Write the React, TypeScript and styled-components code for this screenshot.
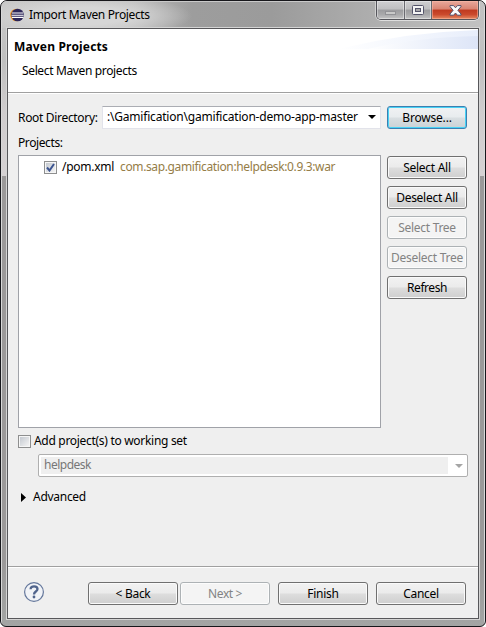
import React from "react";
import styled, { createGlobalStyle, css } from "styled-components";

const Global = createGlobalStyle`
  * { box-sizing: border-box; }
  body { margin: 0; background: #fff; overflow: hidden; }
`;

const Window = styled.div`
  width: 486px;
  height: 627px;
  display: flex;
  flex-direction: column;
  padding: 0 6px 6px 5px;
  border: 1px solid #17171b;
  border-radius: 7px 7px 6px 6px;
  font: 12px/16px "Noto Sans", "Open Sans", sans-serif;
  color: #000;
  background:
    linear-gradient(90deg, #d8d8d8 0 1px, transparent 1px calc(100% - 1px), #d8d8d8 calc(100% - 1px)),
    linear-gradient(180deg, transparent 0 175px, #9b9999 175px 560px, #a3a5a4 100%),
    linear-gradient(180deg, #c4c4c4 0 28px, #bfbfbf 60px, #cfcccd 110px, #d6d2d3 175px);
`;

const TitleBar = styled.header`
  height: 27px;
  flex: none;
  margin: 0 -5px 0 -4px;
  padding-left: 9px;
  display: flex;
  align-items: flex-start;
  border-radius: 5px 5px 0 0;
  border-top: 1px solid #c9c9c9;
  background:
    radial-gradient(ellipse 110px 22px at 80px 14px, #d6d6d6 0 40%, transparent 100%),
    linear-gradient(90deg, #c6c6c6 0, #bcbcbc 130px, #9d9d9d 190px, #9b9b9b 270px, #acacac 360px, #c2c2c2 100%);
`;

const TitleIcon = styled.svg`
  width: 14px;
  height: 14px;
  margin: 6px 5px 0 -1px;
`;

const Label = styled.span<{ $gap?: number; $tone?: string; $bold?: boolean }>`
  display: block;
  white-space: nowrap;
  letter-spacing: ${(p) => p.$gap ?? -0.28}px;
  color: ${(p) => p.$tone ?? "inherit"};
  font-weight: ${(p) => (p.$bold ? 700 : 400)};
`;

const TitleText = styled(Label)`
  margin-top: 5px;
  flex: 1;
`;

const Controls = styled.div`
  display: flex;
  width: 103px;
  height: 19px;
  margin: -1px 5px 0 0;
  border: 1px solid #55555b;
  border-top: 0;
  border-radius: 0 0 5px 5px;
  overflow: hidden;
  box-shadow: 0 1px 0 #dedede, 1px 0 0 #dedede, -1px 0 0 #d0d0d0;
`;

const Control = styled.button<{ $width: number; $close?: boolean }>`
  width: ${(p) => p.$width}px;
  padding: 0;
  border: 0;
  border-right: ${(p) => (p.$close ? "0" : "1px solid #6a6a70")};
  display: flex;
  justify-content: center;
  align-items: center;
  box-shadow: inset 0 0 0 1px ${(p) => (p.$close ? "rgba(255,190,170,.5)" : "rgba(255,255,255,.4)")};
  background: ${(p) =>
    p.$close
      ? "linear-gradient(#e8a89c 0, #d98472 45%, #bf3a20 50%, #cb4a2d 75%, #e58a63 100%)"
      : "linear-gradient(#cfcfd1 0, #bebec0 45%, #9c9c9f 50%, #a9a9ab 75%, #c4c4c5 100%)"};
`;

const Client = styled.main`
  width: 472px;
  height: 591px;
  flex: none;
  margin-left: 1px;
  display: flex;
  flex-direction: column;
  border: 1px solid #57575a;
  background: #efefef;
  box-shadow: 0 0 0 1px #d4d4d4;
`;

const Banner = styled.section`
  height: 64px;
  flex: none;
  display: flex;
  justify-content: space-between;
  background: #fff;
  border-bottom: 1px solid #a0a0a0;
`;

const BannerText = styled.div`
  padding: 10px 0 0 6px;
  display: flex;
  flex-direction: column;
  gap: 8px;
`;

const Indented = styled(Label)`
  margin-left: 8px;
`;

const Swoosh = styled.svg`
  width: 140px;
  height: 20px;
`;

const Content = styled.section`
  height: 474px;
  flex: none;
  padding: 12px 10px 0;
  border-top: 1px solid #fff;
  border-bottom: 1px solid #a0a0a0;
  display: flex;
  flex-direction: column;
`;

const DirectoryRow = styled.div`
  display: flex;
  height: 23px;
`;

const RowCaption = styled.div`
  width: 84px;
  padding-top: 4px;
`;

const Field = styled.div`
  width: 279px;
  margin-right: 6px;
  display: flex;
  align-items: center;
  justify-content: space-between;
  padding: 0 4px 1px 4px;
  background: #fff;
  border: 1px solid #e2e3ea;
  border-top-color: #abadb3;
`;

const Button = styled.button<{ $width?: number; $focus?: boolean }>`
  width: ${(p) => p.$width ?? 80}px;
  height: 23px;
  flex: none;
  padding: 1px 0 0;
  display: flex;
  justify-content: center;
  align-items: center;
  font: inherit;
  color: #000;
  border: 1px solid #707070;
  border-radius: 3px;
  background: linear-gradient(#f2f2f2 0, #ebebeb 48%, #dddddd 52%, #cfcfcf 100%);
  box-shadow: inset 0 0 0 1px #fafafa;
  ${(p) =>
    p.$focus &&
    css`
      border-color: #3c7fb1;
      background: linear-gradient(#f0f2f3 0, #e8ecee 48%, #d9dfe2 52%, #cbd2d6 100%);
      box-shadow: inset 0 0 0 1px #48d2f5;
    `}
  &:disabled {
    color: #838383;
    border-color: #adb2b5;
    background: #f4f4f4;
    box-shadow: inset 0 0 0 1px #fcfcfc;
  }
`;

const ListCaption = styled.div`
  height: 26px;
  padding-top: 6px;
`;

const ProjectsRow = styled.div`
  display: flex;
  gap: 6px;
  height: 273px;
`;

const Tree = styled.div`
  width: 363px;
  background: #fff;
  border: 1px solid #a0a2a8;
  padding: 2px 0 0 25px;
`;

const TreeItem = styled.div`
  display: flex;
  align-items: center;
  height: 17px;
`;

const ItemName = styled(Label)`
  width: 58px;
  margin-left: 5px;
`;

const Coordinates = styled(Label)`
  width: 214px;
`;

const Actions = styled.div`
  display: flex;
  flex-direction: column;
  gap: 7px;
  padding-top: 1px;
`;

const Check = styled.span`
  width: 13px;
  height: 13px;
  flex: none;
  border: 1px solid #8e8f8f;
  background: linear-gradient(135deg, #c4c9d0, #f4f4f4) content-box, #f6f6f6;
  padding: 1px;
  display: flex;
`;

const TreeCheck = styled(Check)`
  margin-top: 2px;
`;

const WorkingSetRow = styled.div`
  display: flex;
  align-items: center;
  gap: 3px;
  height: 26px;
`;

const DisabledCombo = styled.div`
  width: 430px;
  height: 23px;
  margin-left: 20px;
  display: flex;
  align-items: center;
  justify-content: space-between;
  padding: 2px 4px 2px 2px;
  background: #fff;
  border: 1px solid #afafaf;
  border-radius: 2px;
`;

const ComboValue = styled.div`
  width: 407px;
  height: 17px;
  padding-left: 3px;
  background: #efefef;
`;

const AdvancedRow = styled.div`
  display: flex;
  align-items: center;
  gap: 7px;
  margin-top: 12px;
  padding-left: 3px;
`;

const Footer = styled.footer`
  flex: 1;
  display: flex;
  align-items: flex-start;
  padding: 14px 0 0 15px;
  border-top: 1px solid #fff;
`;

const Help = styled.svg`
  width: 22px;
  height: 22px;
  margin: -1px 43px 0 0;
`;

const ButtonGroup = styled.div`
  display: flex;
  gap: 8px;
`;

const Paging = styled.div`
  display: flex;
  gap: 2px;
`;

const Caret = ({ fill, w, h }: { fill: string; w: number; h: number }) => (
  <svg width={w} height={h} viewBox="0 0 9 5" preserveAspectRatio="none">
    <path d="M0 0h9L4.500 5z" fill={fill} />
  </svg>
);

export default function App() {
  return (
    <>
      <Global />
      <Window>
        <TitleBar>
          <TitleIcon viewBox="0 0 14 14">
            <circle cx="6.400" cy="7" r="6.300" fill="#f09a2e" />
            <circle cx="7.600" cy="7" r="6.300" fill="#2c2558" />
            <path d="M2 5h11.400M1.600 7.200h12M2 9.400h11.400" stroke="#fff" strokeWidth="1.100" />
          </TitleIcon>
          <TitleText $gap={-0.36}>Import Maven Projects</TitleText>
          <Controls>
            <Control $width={28} aria-label="Minimize">
              <svg width="11" height="12" viewBox="0 0 11 12">
                <rect x=".5" y="7.500" width="10" height="3" fill="#c9c9c9" stroke="#929296" />
              </svg>
            </Control>
            <Control $width={27} aria-label="Maximize">
              <svg width="12" height="10" viewBox="0 0 12 10">
                <rect x=".5" y=".5" width="11" height="9" rx="1" fill="#f4f4f4" stroke="#54546a" />
                <rect x="3.500" y="3.500" width="5" height="3" fill="#a8a8aa" stroke="#54546a" />
              </svg>
            </Control>
            <Control $width={46} $close aria-label="Close">
              <svg width="13" height="11" viewBox="0 0 13 11">
                <path
                  d="M1 .6h3.600l1.900 2.200L8.400.6H12v1L8.900 5.300 12 9v1.200H8.400L6.500 8 4.600 10.200H1V9l3.100-3.700L1 1.600z"
                  fill="#fafafa"
                  stroke="#54506a"
                />
              </svg>
            </Control>
          </Controls>
        </TitleBar>
        <Client>
          <Banner>
            <BannerText>
              <Label $bold $gap={0.17}>Maven Projects</Label>
              <Indented $gap={-0.36}>Select Maven projects</Indented>
            </BannerText>
            <Swoosh viewBox="0 0 140 20">
              <defs>
                <linearGradient id="far">
                  <stop offset="0" stopColor="#fff" />
                  <stop offset="1" stopColor="#e8eefb" />
                </linearGradient>
                <linearGradient id="near">
                  <stop offset="0" stopColor="#fff" />
                  <stop offset="1" stopColor="#dde5f7" />
                </linearGradient>
              </defs>
              <path d="M0 20Q70 3 140 1V20z" fill="url(#far)" />
              <path d="M30 20Q80 8 140 7V20z" fill="url(#near)" />
            </Swoosh>
          </Banner>
          <Content>
            <DirectoryRow>
              <RowCaption>
                <Label $gap={-0.32}>Root Directory:</Label>
              </RowCaption>
              <Field>
                <Label $gap={-0.2}>:\Gamification\gamification-demo-app-master</Label>
                <Caret fill="#000" w={8} h={4} />
              </Field>
              <Button $focus>
                <Label $gap={-0.2}>Browse...</Label>
              </Button>
            </DirectoryRow>
            <ListCaption>
              <Label $gap={-0.4}>Projects:</Label>
            </ListCaption>
            <ProjectsRow>
              <Tree>
                <TreeItem>
                  <TreeCheck>
                    <svg width="9" height="9" viewBox="0 0 9 9">
                      <path d="M1 4.500 3.500 7.500 8 1" fill="none" stroke="#3c5490" strokeWidth="2" />
                    </svg>
                  </TreeCheck>
                  <ItemName>/pom.xml</ItemName>
                  <Coordinates $gap={-0.37} $tone="#957d47">com.sap.gamification:helpdesk:0.9.3:war</Coordinates>
                </TreeItem>
              </Tree>
              <Actions>
                <Button><Label>Select All</Label></Button>
                <Button><Label>Deselect All</Label></Button>
                <Button disabled><Label>Select Tree</Label></Button>
                <Button disabled><Label>Deselect Tree</Label></Button>
                <Button><Label $gap={-0.45}>Refresh</Label></Button>
              </Actions>
            </ProjectsRow>
            <WorkingSetRow>
              <Check />
              <Label $gap={-0.3}>Add project(s) to working set</Label>
            </WorkingSetRow>
            <DisabledCombo>
              <ComboValue>
                <Label $gap={-0.5} $tone="#777">helpdesk</Label>
              </ComboValue>
              <Caret fill="#a5a5a5" w={8} h={4} />
            </DisabledCombo>
            <AdvancedRow>
              <svg width="5" height="9" viewBox="0 0 5 9">
                <path d="M0 0l5 4.500L0 9z" />
              </svg>
              <Label>Advanced</Label>
            </AdvancedRow>
          </Content>
          <Footer>
            <Help viewBox="0 0 22 22">
              <circle cx="11" cy="11" r="9.400" fill="#f1f3f7" stroke="#64779b" strokeWidth="1.200" />
              <path
                d="M7.600 8.200C7.600 4.300 14.500 4.500 14.500 8.100 14.500 10.600 11 10.500 11 13.400"
                fill="none"
                stroke="#50648c"
                strokeWidth="2.300"
              />
              <circle cx="11" cy="16" r="1.400" fill="#50648c" />
            </Help>
            <ButtonGroup>
              <Paging>
                <Button $width={90}><Label>&lt; Back</Label></Button>
                <Button $width={90} disabled><Label $gap={-0.4}>Next &gt;</Label></Button>
              </Paging>
              <Button $width={90}><Label>Finish</Label></Button>
              <Button $width={90}><Label>Cancel</Label></Button>
            </ButtonGroup>
          </Footer>
        </Client>
      </Window>
    </>
  );
}
